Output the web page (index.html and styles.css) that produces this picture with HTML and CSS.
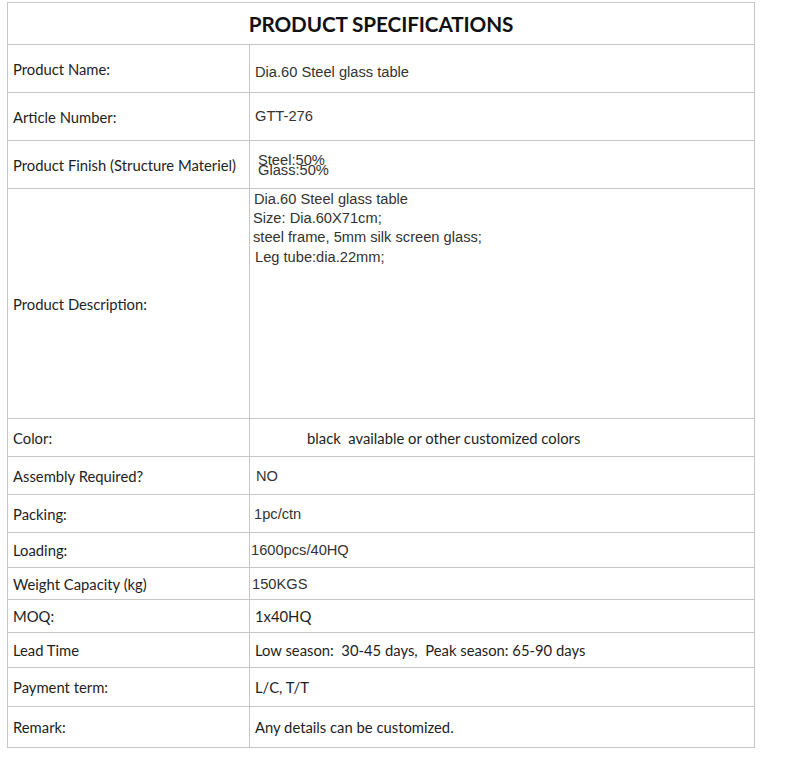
FILE: index.html
```html
<!DOCTYPE html>
<html>
<head>
<meta charset="utf-8">
<link rel="stylesheet" href="styles.css">
</head>
<body>
<table class="spec">
  <colgroup><col class="c-label"><col class="c-val"></colgroup>
  <tr class="r-head"><th colspan="2" class="title">PRODUCT SPECIFICATIONS</th></tr>
  <tr class="r48"><td class="label">Product Name:</td><td class="val arial v-name">Dia.60 Steel glass table</td></tr>
  <tr class="r48"><td class="label">Article Number:</td><td class="val arial v-art">GTT-276</td></tr>
  <tr class="r48"><td class="label">Product Finish (Structure Materiel)</td><td class="val arial v-fin"><div class="tight">Steel:50%<br>Glass:50%</div></td></tr>
  <tr class="r-desc"><td class="label">Product Description:</td><td class="val arial v-desc"><div class="d1">Dia.60 Steel glass table</div><div class="d2">Size: Dia.60X71cm;</div><div class="d2">steel frame, 5mm silk screen glass;</div><div class="d4">Leg tube:dia.22mm;</div></td></tr>
  <tr class="r38"><td class="label">Color:</td><td class="val v-color">black&nbsp; available or other customized colors</td></tr>
  <tr class="r38"><td class="label">Assembly Required?</td><td class="val arial v-no">NO</td></tr>
  <tr class="r38"><td class="label">Packing:</td><td class="val arial v-pack">1pc/ctn</td></tr>
  <tr class="r35"><td class="label">Loading:</td><td class="val arial v-load">1600pcs/40HQ</td></tr>
  <tr class="r32"><td class="label">Weight Capacity (kg)</td><td class="val arial v-kg">150KGS</td></tr>
  <tr class="r33"><td class="label">MOQ:</td><td class="val">1x40HQ</td></tr>
  <tr class="r35"><td class="label">Lead Time</td><td class="val">Low season:&nbsp; 30-45 days,&nbsp; Peak season: 65-90 days</td></tr>
  <tr class="r39"><td class="label">Payment term:</td><td class="val">L/C, T/T</td></tr>
  <tr class="r41"><td class="label">Remark:</td><td class="val">Any details can be customized.</td></tr>
</table>
</body>
</html>
```
FILE: styles.css
```css
html, body {
  margin: 0;
  padding: 0;
  background: #ffffff;
}
body {
  padding: 2px 0 0 7px;
  font-family: Lato, "Liberation Sans", sans-serif;
  color: #1e1e1e;
}
.spec {
  border-collapse: collapse;
  width: 748px;
  table-layout: fixed;
}
.c-label { width: 242px; }
.spec th, .spec td {
  border: 1px solid #c6c6c6;
  padding: 0;
  vertical-align: middle;
  text-align: left;
  font-weight: normal;
}
.title {
  text-align: center !important;
  font-weight: bold !important;
  font-size: 20.7px;
  color: #111;
  letter-spacing: -0.1px;
}
.label {
  padding-left: 5px !important;
  font-size: 14.8px;
}
.val {
  font-size: 14.8px;
  padding-left: 5px !important;
}
.arial {
  font-family: "Liberation Sans", Arial, sans-serif;
  font-size: 14.67px;
  color: #333;
}
.r-head { height: 42px; }
.r48 { height: 48px; }
.r-desc { height: 230px; }
.r38 { height: 38px; }
.r35 { height: 35px; }
.r32 { height: 32px; }
.r33 { height: 33px; }
.r39 { height: 39px; }
.r41 { height: 41px; }

.v-name { padding-top: 7px !important; }
.v-art { padding-bottom: 1px !important; }
.v-fin { padding-left: 8px !important; }
.tight { line-height: 10px; }
.v-desc {
  vertical-align: top !important;
  padding-left: 4px !important;
  padding-top: 1px !important;
  line-height: 19px;
}
.d2 { margin-left: -1px; }
.d4 { margin-left: 1px; margin-top: 1px; }
.v-color { padding-left: 57px !important; }
.v-no { padding-left: 6px !important; }
.v-pack { padding-left: 4px !important; }
.v-load { padding-left: 1px !important; }
.v-kg { padding-left: 2px !important; }
```
